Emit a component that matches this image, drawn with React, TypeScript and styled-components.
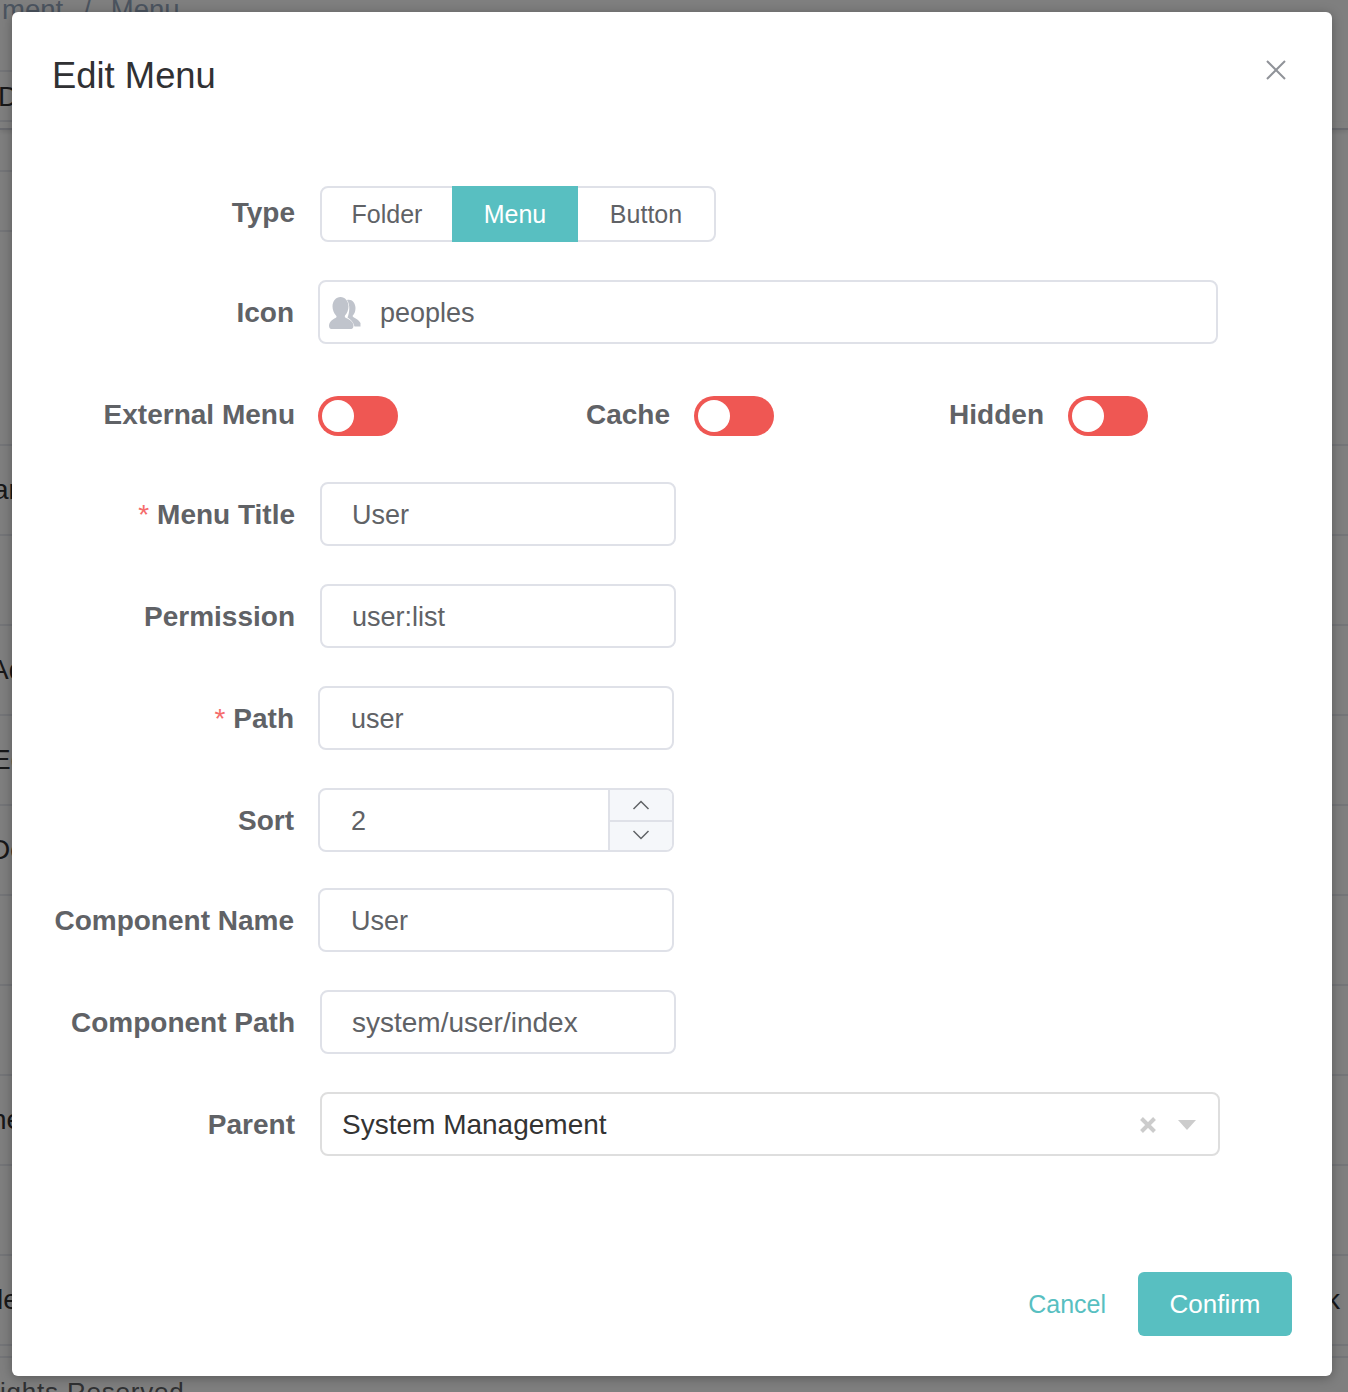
import React from "react";
import styled, { createGlobalStyle } from "styled-components";

const Global = createGlobalStyle`
  html, body { margin: 0; padding: 0; background: #fff; }
  * { box-sizing: border-box; }
  body { font-family: "Liberation Sans", Arial, sans-serif; }
`;

const Page = styled.div`
  position: relative;
  width: 1348px;
  height: 1392px;
  overflow: hidden;
  background: #fff;
`;

const Crumb = styled.div`
  height: 84px;
  margin-top: -12px;
  padding: 0 0 0 2px;
  font-size: 27.500px;
  line-height: 44px;
  color: #97a8be;
  display: flex;
  gap: 20px;
  background: linear-gradient(#e8eaf0, #e8eaf0) left bottom / 200px 2px no-repeat;
`;

const BgRow = styled.div<{ $h: number; $short?: boolean; $shadow?: boolean }>`
  height: ${(p) => p.$h}px;
  display: flex;
  align-items: center;
  justify-content: space-between;
  font-size: 28px;
  color: #303133;
  ${(p) =>
    p.$short
      ? "background: linear-gradient(#e8eaf0, #e8eaf0) left bottom / 200px 2px no-repeat;"
      : "border-bottom: 2px solid #e8eaf0;"}
  ${(p) => (p.$shadow ? "box-shadow: 0 2px 4px rgba(0,0,0,.1); border-bottom-color: #d2d5de;" : "")}
`;

const BgLeft = styled.span<{ $x: number }>`
  margin-left: ${(p) => p.$x}px;
`;

const BgRight = styled.span`
  padding-right: 8px;
`;

const BgFooter = styled.div`
  margin-top: 14px;
  font-size: 26px;
  line-height: 40px;
  letter-spacing: 0.8px;
  color: #606266;
  white-space: nowrap;
`;

const Overlay = styled.div`
  position: absolute;
  inset: 0;
  background: rgba(0, 0, 0, 0.5);
`;

const Modal = styled.div`
  position: absolute;
  left: 12px;
  top: 12px;
  width: 1320px;
  height: 1364px;
  background: #fff;
  border-radius: 6px;
  box-shadow: 0 2px 12px rgba(0, 0, 0, 0.3);
  display: flex;
  flex-direction: column;
`;

const Title = styled.h2`
  margin: 0;
  padding: 40px 40px 0;
  font-size: 36.4px;
  line-height: 48px;
  font-weight: 400;
  color: #303133;
`;

const Close = styled.svg`
  position: absolute;
  top: 47px;
  right: 45px;
  width: 22px;
  height: 22px;
`;

const Form = styled.div`
  margin-top: 82px;
  padding-left: 40px;
  display: flex;
  flex-direction: column;
`;

const Row = styled.div<{ $after?: number }>`
  height: 64px;
  margin-bottom: ${(p) => p.$after ?? 38}px;
  display: flex;
  align-items: center;
`;

const Label = styled.div<{ $w: number; $pad?: number; $up?: boolean }>`
  flex: none;
  width: ${(p) => p.$w}px;
  padding-right: ${(p) => p.$pad ?? 24}px;
  ${(p) => (p.$up ? "padding-bottom: 2px;" : "padding-top: 2px;")}
  text-align: right;
  font-size: 28px;
  font-weight: 700;
  color: #606266;
  white-space: nowrap;
`;

const Star = styled.span`
  margin-right: 8px;
  font-weight: 400;
  color: #f56c6c;
`;

const RadioGroup = styled.div`
  display: flex;
  height: 56px;
  border: 2px solid #dfe1e8;
  border-radius: 8px;
`;

const Radio = styled.div<{ $w: number; $on?: boolean }>`
  width: ${(p) => p.$w}px;
  margin: ${(p) => (p.$on ? "-2px 0" : "0")};
  display: flex;
  align-items: center;
  justify-content: center;
  font-size: 25px;
  color: ${(p) => (p.$on ? "#fff" : "#606266")};
  background: ${(p) => (p.$on ? "#58bfc1" : "transparent")};
`;

const Input = styled.div<{ $w: number; $left?: number; $size?: number }>`
  position: relative;
  width: ${(p) => p.$w}px;
  height: 64px;
  padding: 2px 0 0 ${(p) => p.$left ?? 30}px;
  display: flex;
  align-items: center;
  font-size: ${(p) => p.$size ?? 27}px;
  color: #606266;
  border: 2px solid #dfe1e8;
  border-radius: 8px;
  overflow: hidden;
`;

const IconInput = styled(Input)`
  gap: 19px;
`;

const Spinner = styled.div`
  position: absolute;
  top: 0;
  right: 0;
  bottom: 0;
  width: 64px;
  display: grid;
  grid-template-rows: 32px 1fr;
  background: #f5f7fa;
  border-left: 2px solid #dfe1e8;
`;

const SpinCell = styled.div<{ $top?: boolean }>`
  display: flex;
  align-items: center;
  justify-content: center;
  ${(p) => (p.$top ? "border-bottom: 2px solid #dfe1e8;" : "padding-bottom: 2px;")}
`;

const Switch = styled.div`
  flex: none;
  width: 80px;
  height: 40px;
  padding: 4px;
  border-radius: 20px;
  background: #ef5753;
`;

const Knob = styled.div`
  width: 32px;
  height: 32px;
  border-radius: 50%;
  background: #fff;
`;

const Select = styled.div`
  width: 900px;
  height: 64px;
  padding: 2px 22px 0 20px;
  display: flex;
  align-items: center;
  gap: 21px;
  font-size: 28px;
  color: #333;
  border: 2px solid #dedede;
  border-radius: 8px;
`;

const SelectText = styled.span`
  flex: 1;
`;

const Footer = styled.div`
  margin-top: auto;
  padding: 0 40px 40px 0;
  display: flex;
  justify-content: flex-end;
  align-items: center;
`;

const TextButton = styled.div`
  padding: 0 32px;
  font-size: 25px;
  color: #58bfc1;
`;

const PrimaryButton = styled.div`
  width: 154px;
  height: 64px;
  display: flex;
  align-items: center;
  justify-content: center;
  font-size: 26px;
  color: #fff;
  background: #58bfc1;
  border-radius: 6px;
`;

const PeoplesIcon = () => (
  <svg width="32" height="32" viewBox="0 0 32 32">
    <path
      fill="#c0c4cc"
      d="M18 3C22 1.500 26.500 5 26.500 11C26.500 14 25.500 17 23.500 19C24.500 21 29.500 22 31.500 26L31.500 29.500L25.500 29.500C24.500 25.500 22 22.500 18.500 20.500C20.500 16 21.500 8 18 3Z"
    />
    <path
      fill="#c0c4cc"
      d="M11.500 0C16 0 19.500 4 19.500 9.500C19.500 13 18 16.500 16 18.500C15.500 19.500 16 20.500 17 21C20.500 22.500 24 24.500 24.500 28.500C24.500 30 24 31.500 22.500 32L2 32C.5 31.500 0 30 0 28.500C.5 24.500 3.500 22.500 6.500 21C7.500 20.500 8 19.500 7 18.500C5 16.500 3.500 13 3.500 9.500C3.500 4 7 0 11.500 0Z"
    />
  </svg>
);

const Chevron = ({ up }: { up?: boolean }) => (
  <svg width="18" height="12" viewBox="0 0 18 12">
    <path
      d={up ? "M1.500 10 9 2.500 16.500 10" : "M1.500 2 9 9.500 16.500 2"}
      fill="none"
      stroke="#606266"
      strokeWidth="1.500"
    />
  </svg>
);

const rowHeights: { h: number; l?: string; x?: number; r?: string; short?: boolean; shadow?: boolean }[] = [
  { h: 50, l: "D", x: -2, short: true },
  { h: 8, shadow: true },
  { h: 42, short: true },
  { h: 60, short: true },
  { h: 214 },
  { h: 90, l: "ar", x: -7 },
  { h: 90 },
  { h: 90, l: "Ad", x: -10 },
  { h: 90, l: "Ed", x: -8 },
  { h: 90, l: "De", x: -10 },
  { h: 90 },
  { h: 90 },
  { h: 90, l: "ne", x: -9 },
  { h: 90 },
  { h: 90, l: "le", x: -3, r: "k" },
  { h: 12 },
];

export default function App() {
  return (
    <Page>
      <Global />
      <Crumb>
        <span>ment</span>
        <span>/</span>
        <span>Menu</span>
      </Crumb>
      {rowHeights.map((r, i) => (
        <BgRow key={i} $h={r.h} $short={r.short} $shadow={r.shadow}>
          <BgLeft $x={r.x ?? 0}>{r.l}</BgLeft>
          <BgRight>{r.r}</BgRight>
        </BgRow>
      ))}
      <BgFooter>ights Reserved</BgFooter>
      <Overlay />
      <Modal>
        <Title>Edit Menu</Title>
        <Close viewBox="0 0 22 22">
          <path d="M2 2 20 20M20 2 2 20" stroke="#909399" strokeWidth="2" fill="none" />
        </Close>
        <Form>
          <Row $after={34}>
            <Label $w={268} $pad={25} $up>Type</Label>
            <RadioGroup>
              <Radio $w={130}>Folder</Radio>
              <Radio $w={126} $on>Menu</Radio>
              <Radio $w={136}>Button</Radio>
            </RadioGroup>
          </Row>
          <Row $after={40}>
            <Label $w={266}>Icon</Label>
            <IconInput $w={900} $left={9}>
              <PeoplesIcon />
              peoples
            </IconInput>
          </Row>
          <Row $after={34}>
            <Label $w={266} $pad={23} $up>External Menu</Label>
            <Switch><Knob /></Switch>
            <Label $w={296} $up>Cache</Label>
            <Switch><Knob /></Switch>
            <Label $w={294} $up>Hidden</Label>
            <Switch><Knob /></Switch>
          </Row>
          <Row>
            <Label $w={268} $pad={25}><Star>*</Star>Menu Title</Label>
            <Input $w={356}>User</Input>
          </Row>
          <Row>
            <Label $w={268} $pad={25}>Permission</Label>
            <Input $w={356}>user:list</Input>
          </Row>
          <Row>
            <Label $w={266}><Star>*</Star>Path</Label>
            <Input $w={356} $left={31}>user</Input>
          </Row>
          <Row $after={36}>
            <Label $w={266}>Sort</Label>
            <Input $w={356} $left={31}>
              2
              <Spinner>
                <SpinCell $top><Chevron up /></SpinCell>
                <SpinCell><Chevron /></SpinCell>
              </Spinner>
            </Input>
          </Row>
          <Row>
            <Label $w={266}>Component Name</Label>
            <Input $w={356} $left={31}>User</Input>
          </Row>
          <Row>
            <Label $w={268} $pad={25}>Component Path</Label>
            <Input $w={356} $size={28}>system/user/index</Input>
          </Row>
          <Row $after={0}>
            <Label $w={268} $pad={25}>Parent</Label>
            <Select>
              <SelectText>System Management</SelectText>
              <svg width="18" height="18" viewBox="0 0 18 18">
                <path d="M2.500 2.500 15.500 15.500M15.500 2.500 2.500 15.500" stroke="#cccccc" strokeWidth="4" fill="none" />
              </svg>
              <svg width="18" height="10" viewBox="0 0 18 10">
                <path d="M0 0H18L9 10Z" fill="#cccccc" />
              </svg>
            </Select>
          </Row>
        </Form>
        <Footer>
          <TextButton>Cancel</TextButton>
          <PrimaryButton>Confirm</PrimaryButton>
        </Footer>
      </Modal>
    </Page>
  );
}
